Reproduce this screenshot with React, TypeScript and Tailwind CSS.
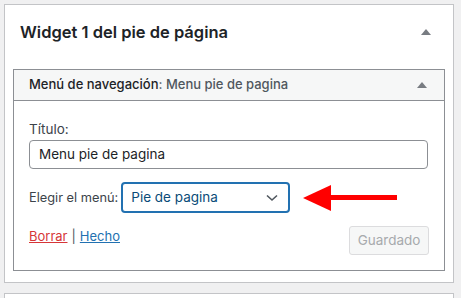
import React from 'react';

// Small up-pointing triangle used as the WP "toggle" indicator
const ToggleTriangle = () => (
  <svg width="10" height="6" viewBox="0 0 10 6" className="shrink-0">
    <polygon points="5,0 10,6 0,6" fill="#787c82" />
  </svg>
);

// Red annotation arrow pointing left at the select
const RedArrow = () => (
  <svg width="96" height="28" viewBox="0 0 96 28" className="shrink-0">
    <polygon points="0,14 28,1 28,27" fill="#ff0000" />
    <rect x="27" y="11" width="67" height="5" fill="#ff0000" />
  </svg>
);

const App: React.FC = () => {
  return (
    <div
      className="w-[461px] h-[298px] overflow-hidden bg-[#f0f0f1] pt-[4px] pl-[4px] text-[#1d2327]"
      style={{ fontFamily: 'Inter, "Noto Sans", sans-serif' }}
    >
      {/* Sidebar panel */}
      <div className="w-[450px] border border-[#c3c4c7] bg-white pb-[11px]">
        <div className="h-[64px] flex items-center justify-between pl-[15px] pr-[22px] pb-[10px]">
          <h2 className="text-[16.5px] font-semibold leading-none">Widget 1 del pie de página</h2>
          <ToggleTriangle />
        </div>

        {/* Widget */}
        <div className="mx-[8px] border border-[#8c8f94] bg-white">
          <div className="h-[31px] flex items-center justify-between bg-[#f6f7f7] border-b border-[#8c8f94] pl-[15px] pr-[17px]">
            <div className="text-[13px] font-medium">
              Menú de navegación<span className="text-[#50575e]">: Menu pie de pagina</span>
            </div>
            <ToggleTriangle />
          </div>

          <div className="pl-[15px] pr-[15px] pt-[18px] pb-[15px]">
            <label className="block text-[13.5px] leading-[20px] text-[#3c434a]">Título:</label>
            <div className="mt-[1px] h-[29px] w-[399px] border border-[#8c8f94] rounded-[4px] flex items-center px-[9px] text-[13.5px]">
              Menu pie de pagina
            </div>

            <div className="mt-[13px] flex items-center">
              <span className="text-[12.8px] text-[#3c434a] mr-[3px]">Elegir el menú:</span>
              <div className="h-[31px] w-[169px] border-2 border-[#2271b1] rounded-[4px] flex items-center justify-between pl-[8px] pr-[10px] text-[13.5px] text-[#0a4b78]">
                <span>Pie de pagina</span>
                <svg width="12" height="8" viewBox="0 0 12 8">
                  <path d="M1 1.5 L6 6 L11 1.5" fill="none" stroke="#50575e" strokeWidth="1.6" />
                </svg>
              </div>
              <div className="ml-[13px]">
                <RedArrow />
              </div>
            </div>

            <div className="mt-[13px] flex items-start justify-between">
              <div className="pt-[1px] text-[13px] flex gap-[4px]">
                <a className="text-[#d63638] underline">Borrar</a>
                <span className="text-[#50575e]">|</span>
                <a className="text-[#2271b1] underline">Hecho</a>
              </div>
              <button className="h-[29px] w-[80px] border border-[#dcdcde] rounded-[3px] bg-[#f6f7f7] text-[#a7aaad] text-[13.5px]">
                Guardado
              </button>
            </div>
          </div>
        </div>
      </div>

      {/* Next panel peeking in */}
      <div className="mt-[10px] w-[450px] h-[20px] border border-[#c3c4c7] bg-white" />
    </div>
  );
};

export default App;
